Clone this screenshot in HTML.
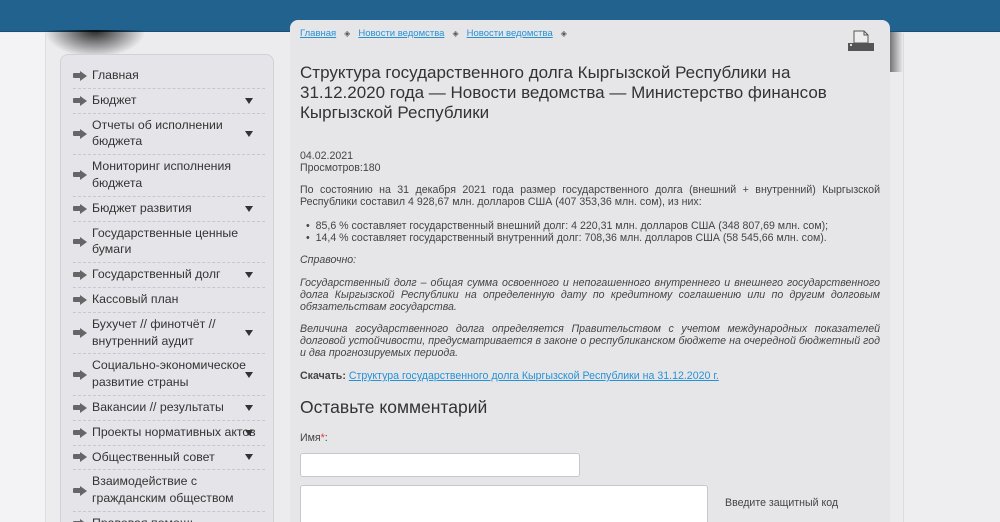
<!DOCTYPE html>
<html><head><meta charset="utf-8"><style>
*{margin:0;padding:0;box-sizing:border-box}
html,body{width:1000px;height:522px;overflow:hidden}
body{background:#ececef;font-family:"Liberation Sans",sans-serif;position:relative;color:#444}
.hdr{position:absolute;left:0;top:0;width:1000px;height:32px;background:#22628f;border-bottom:1px solid #1a4f75}
.lg{position:absolute;left:0;top:33px;width:46px;height:489px;background:#f3f3f5;border-right:1px solid #dcdce0}
.rg{position:absolute;left:903px;top:33px;width:97px;height:489px;background:#eeeef1;border-left:1px solid #dcdce0}
.sh1{position:absolute;left:40px;top:30px;width:110px;height:30px;background:radial-gradient(ellipse at 50% 0,rgba(0,0,0,.85),rgba(0,0,0,0) 65%)}
.sh2{position:absolute;left:885px;top:32px;width:18px;height:40px;background:linear-gradient(90deg,rgba(0,0,0,.7),rgba(0,0,0,0))}
.side{position:absolute;left:60px;top:54px;width:214px;height:468px;background:#e5e5e9;border:1px solid #d2d2d6;border-bottom:0;border-radius:8px 8px 0 0;overflow:hidden}
.side ul{list-style:none;position:absolute;left:12px;top:9px;width:192px}
.side li{position:relative;padding:3px 0 4px 19px;font-size:12.3px;line-height:16.8px;color:#333;border-bottom:1px dashed #c8c8cc}
.side li:before{content:"";position:absolute;left:0;top:50%;margin-top:-3px;width:8px;height:5px;background:#666;border-radius:1px}
.side li:after{content:"";position:absolute;left:7px;top:50%;margin-top:-5px;border:5px solid transparent;border-left:7px solid #666;border-right:0}
.side li b{position:absolute;right:12px;top:50%;margin-top:-3px;border:4px solid transparent;border-top:6px solid #333;border-bottom:0;width:0;height:0}
.main{position:absolute;left:290px;top:20px;width:600px;height:502px;background:#e6e6e9;border-radius:8px 8px 0 0;overflow:hidden}
.bc{position:absolute;left:10px;top:8px;font-size:9.5px}
.bc a{color:#2592d6;text-decoration:underline}
.bc i{font-style:normal;color:#555;margin:0 8px;font-size:8px}
h1{position:absolute;left:10px;top:43px;width:540px;font-size:17px;font-weight:normal;line-height:20px;color:#333}
.t{position:absolute;left:10px;width:580px;font-size:10.6px;line-height:12px;color:#444;text-align:justify}
.it{font-style:italic}
a.l{color:#2592d6}
h2{position:absolute;left:10px;top:377px;font-size:17.5px;font-weight:normal;color:#333}
.in{position:absolute;background:#fff;border:1px solid #c8c8cc;border-radius:3px}
</style></head><body>
<div class="hdr"></div>
<div class="lg"></div><div class="rg"></div>
<div class="sh1"></div><div class="sh2"></div>
<div class="side"><ul>
<li>Главная</li>
<li>Бюджет<b></b></li>
<li>Отчеты об исполнении бюджета<b></b></li>
<li>Мониторинг исполнения бюджета</li>
<li>Бюджет развития<b></b></li>
<li>Государственные ценные бумаги</li>
<li>Государственный долг<b></b></li>
<li>Кассовый план</li>
<li>Бухучет // финотчёт // внутренний аудит<b></b></li>
<li>Социально-экономическое развитие страны<b></b></li>
<li>Вакансии // результаты<b></b></li>
<li>Проекты нормативных актов<b></b></li>
<li>Общественный совет<b></b></li>
<li>Взаимодействие с гражданским обществом</li>
<li>Правовая помощь</li>
</ul></div>
<div class="main">
<div class="bc"><a>Главная</a><i>◈</i><a>Новости ведомства</a><i>◈</i><a>Новости ведомства</a><i>◈</i></div>
<svg style="position:absolute;left:557px;top:10px" width="28" height="22"><path d="M7 1h10l4 4v8H7z" fill="#eee" stroke="#555"/><path d="M17 1v4h4" fill="none" stroke="#555"/><rect x="1" y="13" width="26" height="8" fill="#555"/><rect x="3" y="14" width="2" height="2" fill="#ddd"/></svg>
<h1>Структура государственного долга Кыргызской Республики на 31.12.2020 года — Новости ведомства — Министерство финансов Кыргызской Республики</h1>
<div class="t" style="top:130px;text-align:left">04.02.2021<br>Просмотров:180</div>
<div class="t" style="top:164px">По состоянию на 31 декабря 2021 года размер государственного долга (внешний + внутренний) Кыргызской Республики составил 4 928,67 млн. долларов США (407 353,36 млн. сом), из них:</div>
<div class="t" style="top:200px;left:16px">•&nbsp; 85,6 % составляет государственный внешний долг: 4 220,31 млн. долларов США (348 807,69 млн. сом);<br>•&nbsp; 14,4 % составляет государственный внутренний долг: 708,36 млн. долларов США (58 545,66 млн. сом).</div>
<div class="t it" style="top:234px">Справочно:</div>
<div class="t it" style="top:257px">Государственный долг – общая сумма освоенного и непогашенного внутреннего и внешнего государственного долга Кыргызской Республики на определенную дату по кредитному соглашению или по другим долговым обязательствам государства.</div>
<div class="t it" style="top:303px">Величина государственного долга определяется Правительством с учетом международных показателей долговой устойчивости, предусматривается в законе о республиканском бюджете на очередной бюджетный год и два прогнозируемых периода.</div>
<div class="t" style="top:350px"><b>Скачать:</b> <a class="l" style="text-decoration:underline">Структура государственного долга Кыргызской Республики на 31.12.2020 г.</a></div>
<h2>Оставьте комментарий</h2>
<div class="t" style="top:412px">Имя<span style="color:#e33">*</span>:</div>
<div class="in" style="left:10px;top:433px;width:280px;height:24px"></div>
<div class="in" style="left:10px;top:465px;width:408px;height:70px"></div>
<div class="t" style="top:477px;left:435px;width:150px">Введите защитный код</div>
</div>
</body></html>
